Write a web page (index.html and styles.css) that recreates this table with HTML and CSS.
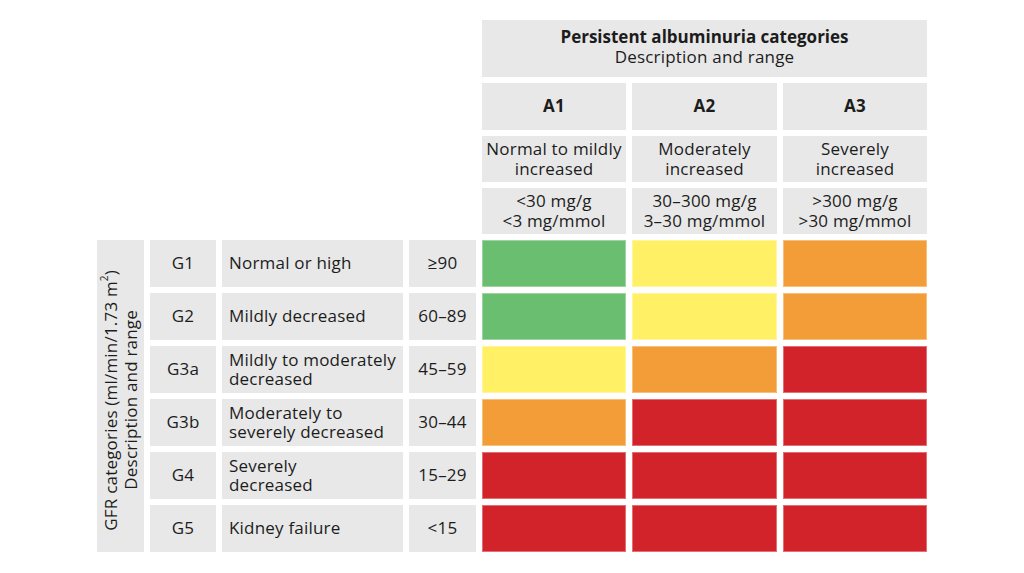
FILE: index.html
```html
<!DOCTYPE html>
<html lang="en">
<head>
<meta charset="utf-8">
<title>CKD heat map</title>
<link rel="stylesheet" href="styles.css">
</head>
<body>
<div class="chart">
  <div class="cell head-main"><span><strong>Persistent albuminuria categories</strong><br>Description and range</span></div>

  <div class="cell bold a1"><span>A1</span></div>
  <div class="cell bold"><span>A2</span></div>
  <div class="cell bold"><span>A3</span></div>

  <div class="cell a1"><span>Normal to mildly<br>increased</span></div>
  <div class="cell"><span>Moderately<br>increased</span></div>
  <div class="cell"><span>Severely<br>increased</span></div>

  <div class="cell a1"><span>&lt;30 mg/g<br>&lt;3 mg/mmol</span></div>
  <div class="cell"><span>30–300 mg/g<br>3–30 mg/mmol</span></div>
  <div class="cell"><span>&gt;300 mg/g<br>&gt;30 mg/mmol</span></div>

  <div class="cell side"><span class="side-text">GFR categories (ml/min/1.73 m<sup>2</sup>)<br>Description and range</span></div>

  <div class="cell"><span>G1</span></div>
  <div class="cell desc"><span>Normal or high</span></div>
  <div class="cell"><span>≥90</span></div>
  <div class="risk green"></div><div class="risk yellow"></div><div class="risk orange"></div>

  <div class="cell"><span>G2</span></div>
  <div class="cell desc"><span>Mildly decreased</span></div>
  <div class="cell"><span>60–89</span></div>
  <div class="risk green"></div><div class="risk yellow"></div><div class="risk orange"></div>

  <div class="cell"><span>G3a</span></div>
  <div class="cell desc"><span>Mildly to moderately<br>decreased</span></div>
  <div class="cell"><span>45–59</span></div>
  <div class="risk yellow"></div><div class="risk orange"></div><div class="risk red"></div>

  <div class="cell"><span>G3b</span></div>
  <div class="cell desc"><span>Moderately to<br>severely decreased</span></div>
  <div class="cell"><span>30–44</span></div>
  <div class="risk orange"></div><div class="risk red"></div><div class="risk red"></div>

  <div class="cell"><span>G4</span></div>
  <div class="cell desc"><span>Severely<br>decreased</span></div>
  <div class="cell"><span>15–29</span></div>
  <div class="risk red"></div><div class="risk red"></div><div class="risk red"></div>

  <div class="cell"><span>G5</span></div>
  <div class="cell desc"><span>Kidney failure</span></div>
  <div class="cell"><span>&lt;15</span></div>
  <div class="risk red"></div><div class="risk red"></div><div class="risk red"></div>
</div>
</body>
</html>
```
FILE: styles.css
```css
html, body {
  margin: 0;
  padding: 0;
  background: #ffffff;
}
body {
  font-family: "Open Sans", "DejaVu Sans", sans-serif;
  color: #1c1c1c;
  font-size: 17px;
  letter-spacing: 0.2px;
}
.chart {
  width: 830px;
  margin: 20px auto 0;
  display: grid;
  grid-template-columns: 47px 66px 181px 67px 144px 145px 144px;
  grid-template-rows: 57px 47px 46px 46px repeat(6, 47px);
  gap: 6px;
}
.cell {
  background: #e8e8e8;
  display: flex;
  align-items: center;
  justify-content: center;
  text-align: center;
  line-height: 19.5px;
  white-space: nowrap;
  padding-bottom: 1px;
}
.head-main {
  grid-column: 5 / 8;
  grid-row: 1;
  padding-bottom: 4px;
}
.head-main strong {
  font-weight: 700;
  letter-spacing: 0;
}
.bold {
  font-weight: 700;
}
.a1 {
  grid-column: 5;
}
.side {
  grid-column: 1;
  grid-row: 5 / 11;
  padding: 8px 0 0 0;
}
.side-text {
  writing-mode: vertical-rl;
  transform: rotate(180deg);
  line-height: 20px;
  white-space: nowrap;
}
.side-text sup {
  font-size: 10px;
  line-height: 0;
}
.desc {
  justify-content: flex-start;
  text-align: left;
  padding-left: 7px;
}
.risk {
  border: 1px solid rgba(255, 255, 255, 0.35);
}
.green { background: #6abe6f; }
.yellow { background: #fff066; }
.orange { background: #f29d37; }
.red { background: #d2232a; }
```
